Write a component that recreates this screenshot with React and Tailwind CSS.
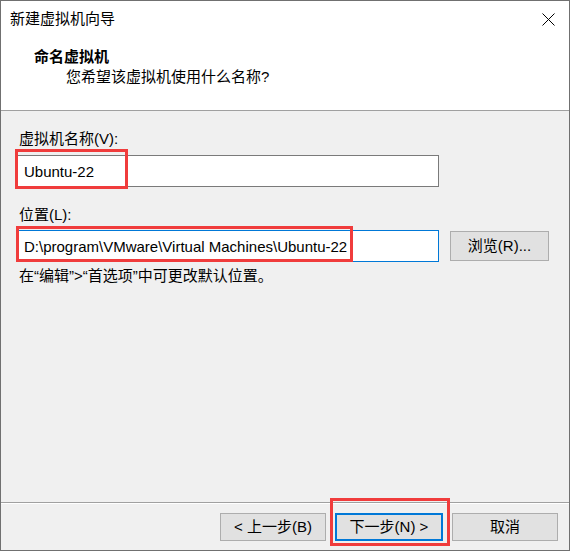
const font = { fontFamily: '"Liberation Sans", "Noto Sans CJK SC", sans-serif' };

const Btn = ({ children, primary }) => (
  <button
    className={
      "h-[28px] bg-[#e1e1e1] text-[15px] leading-[20px] text-black " +
      (primary ? "w-[108px] border-2 border-[#0078d7]" : "w-[106px] border border-[#adadad]")
    }
  >
    {children}
  </button>
);

export default function App() {
  return (
    <div
      className="w-[570px] h-[551px] border border-[#707070] bg-[#f0f0f0] flex flex-col text-black"
      style={font}
    >
      {/* title + header */}
      <div className="h-[110px] shrink-0 bg-white border-b border-[#a0a0a0] flex flex-col">
        <div className="flex items-start justify-between mt-[8px]">
          <span className="ml-[9px] text-[15px] leading-[20px]">新建虚拟机向导</span>
          <svg className="mt-[4px] mr-[14px]" width="13" height="13" viewBox="0 0 13 13">
            <path d="M0.5 0.5 L12.5 12.5 M12.5 0.5 L0.5 12.5" stroke="#000" strokeWidth="1" fill="none" />
          </svg>
        </div>
        <div className="mt-[18px] ml-[33px] text-[15px] leading-[20px] font-bold">命名虚拟机</div>
        <div className="ml-[65px] text-[15px] leading-[20px]">您希望该虚拟机使用什么名称?</div>
      </div>

      {/* body */}
      <div className="flex-1 flex flex-col pl-[16px]">
        <label className="mt-[18px] ml-[2px] text-[15px] leading-[20px]">虚拟机名称(V):</label>
        <div className="relative mt-[6px] w-[422px] h-[32px]">
          <input
            className="w-full h-full bg-white border border-[#7a7a7a] pl-[6px] text-[15px] outline-none"
            defaultValue="Ubuntu-22"
            style={font}
          />
          <span className="absolute left-[-2px] top-[-6px] w-[113px] h-[40px] border-[3px] border-[#f03c3c] pointer-events-none" />
        </div>

        <label className="mt-[18px] ml-[2px] text-[15px] leading-[20px]">位置(L):</label>
        <div className="mt-[5px] flex items-center gap-[11px]">
          <div className="relative w-[422px] h-[32px]">
            <input
              className="w-full h-full bg-white border border-[#0078d7] pl-[6px] text-[15px] outline-none"
              defaultValue="D:\program\VMware\Virtual Machines\Ubuntu-22"
              style={font}
            />
            <span className="absolute left-[-1px] top-[-4px] w-[337px] h-[36px] border-[3px] border-[#f03c3c] pointer-events-none" />
          </div>
          <button className="w-[99px] h-[30px] bg-[#e1e1e1] border border-[#adadad] text-[15px] leading-[20px]">
            浏览(R)...
          </button>
        </div>
        <p className="mt-[4px] ml-[2px] text-[15px] leading-[20px]">在“编辑”&gt;“首选项”中可更改默认位置。</p>
      </div>

      {/* footer */}
      <div className="h-[48px] shrink-0 border-t border-[#a0a0a0]">
        <div className="h-full border-t border-white flex items-start justify-end gap-[9px] pr-[11px] pt-[9px]">
          <Btn>&lt; 上一步(B)</Btn>
          <div className="relative">
            <Btn primary>下一步(N) &gt;</Btn>
            <span className="absolute left-[-5px] right-[-7px] top-[-15px] bottom-[-5px] border-[3px] border-[#f03c3c] pointer-events-none" />
          </div>
          <Btn>取消</Btn>
        </div>
      </div>
    </div>
  );
}
